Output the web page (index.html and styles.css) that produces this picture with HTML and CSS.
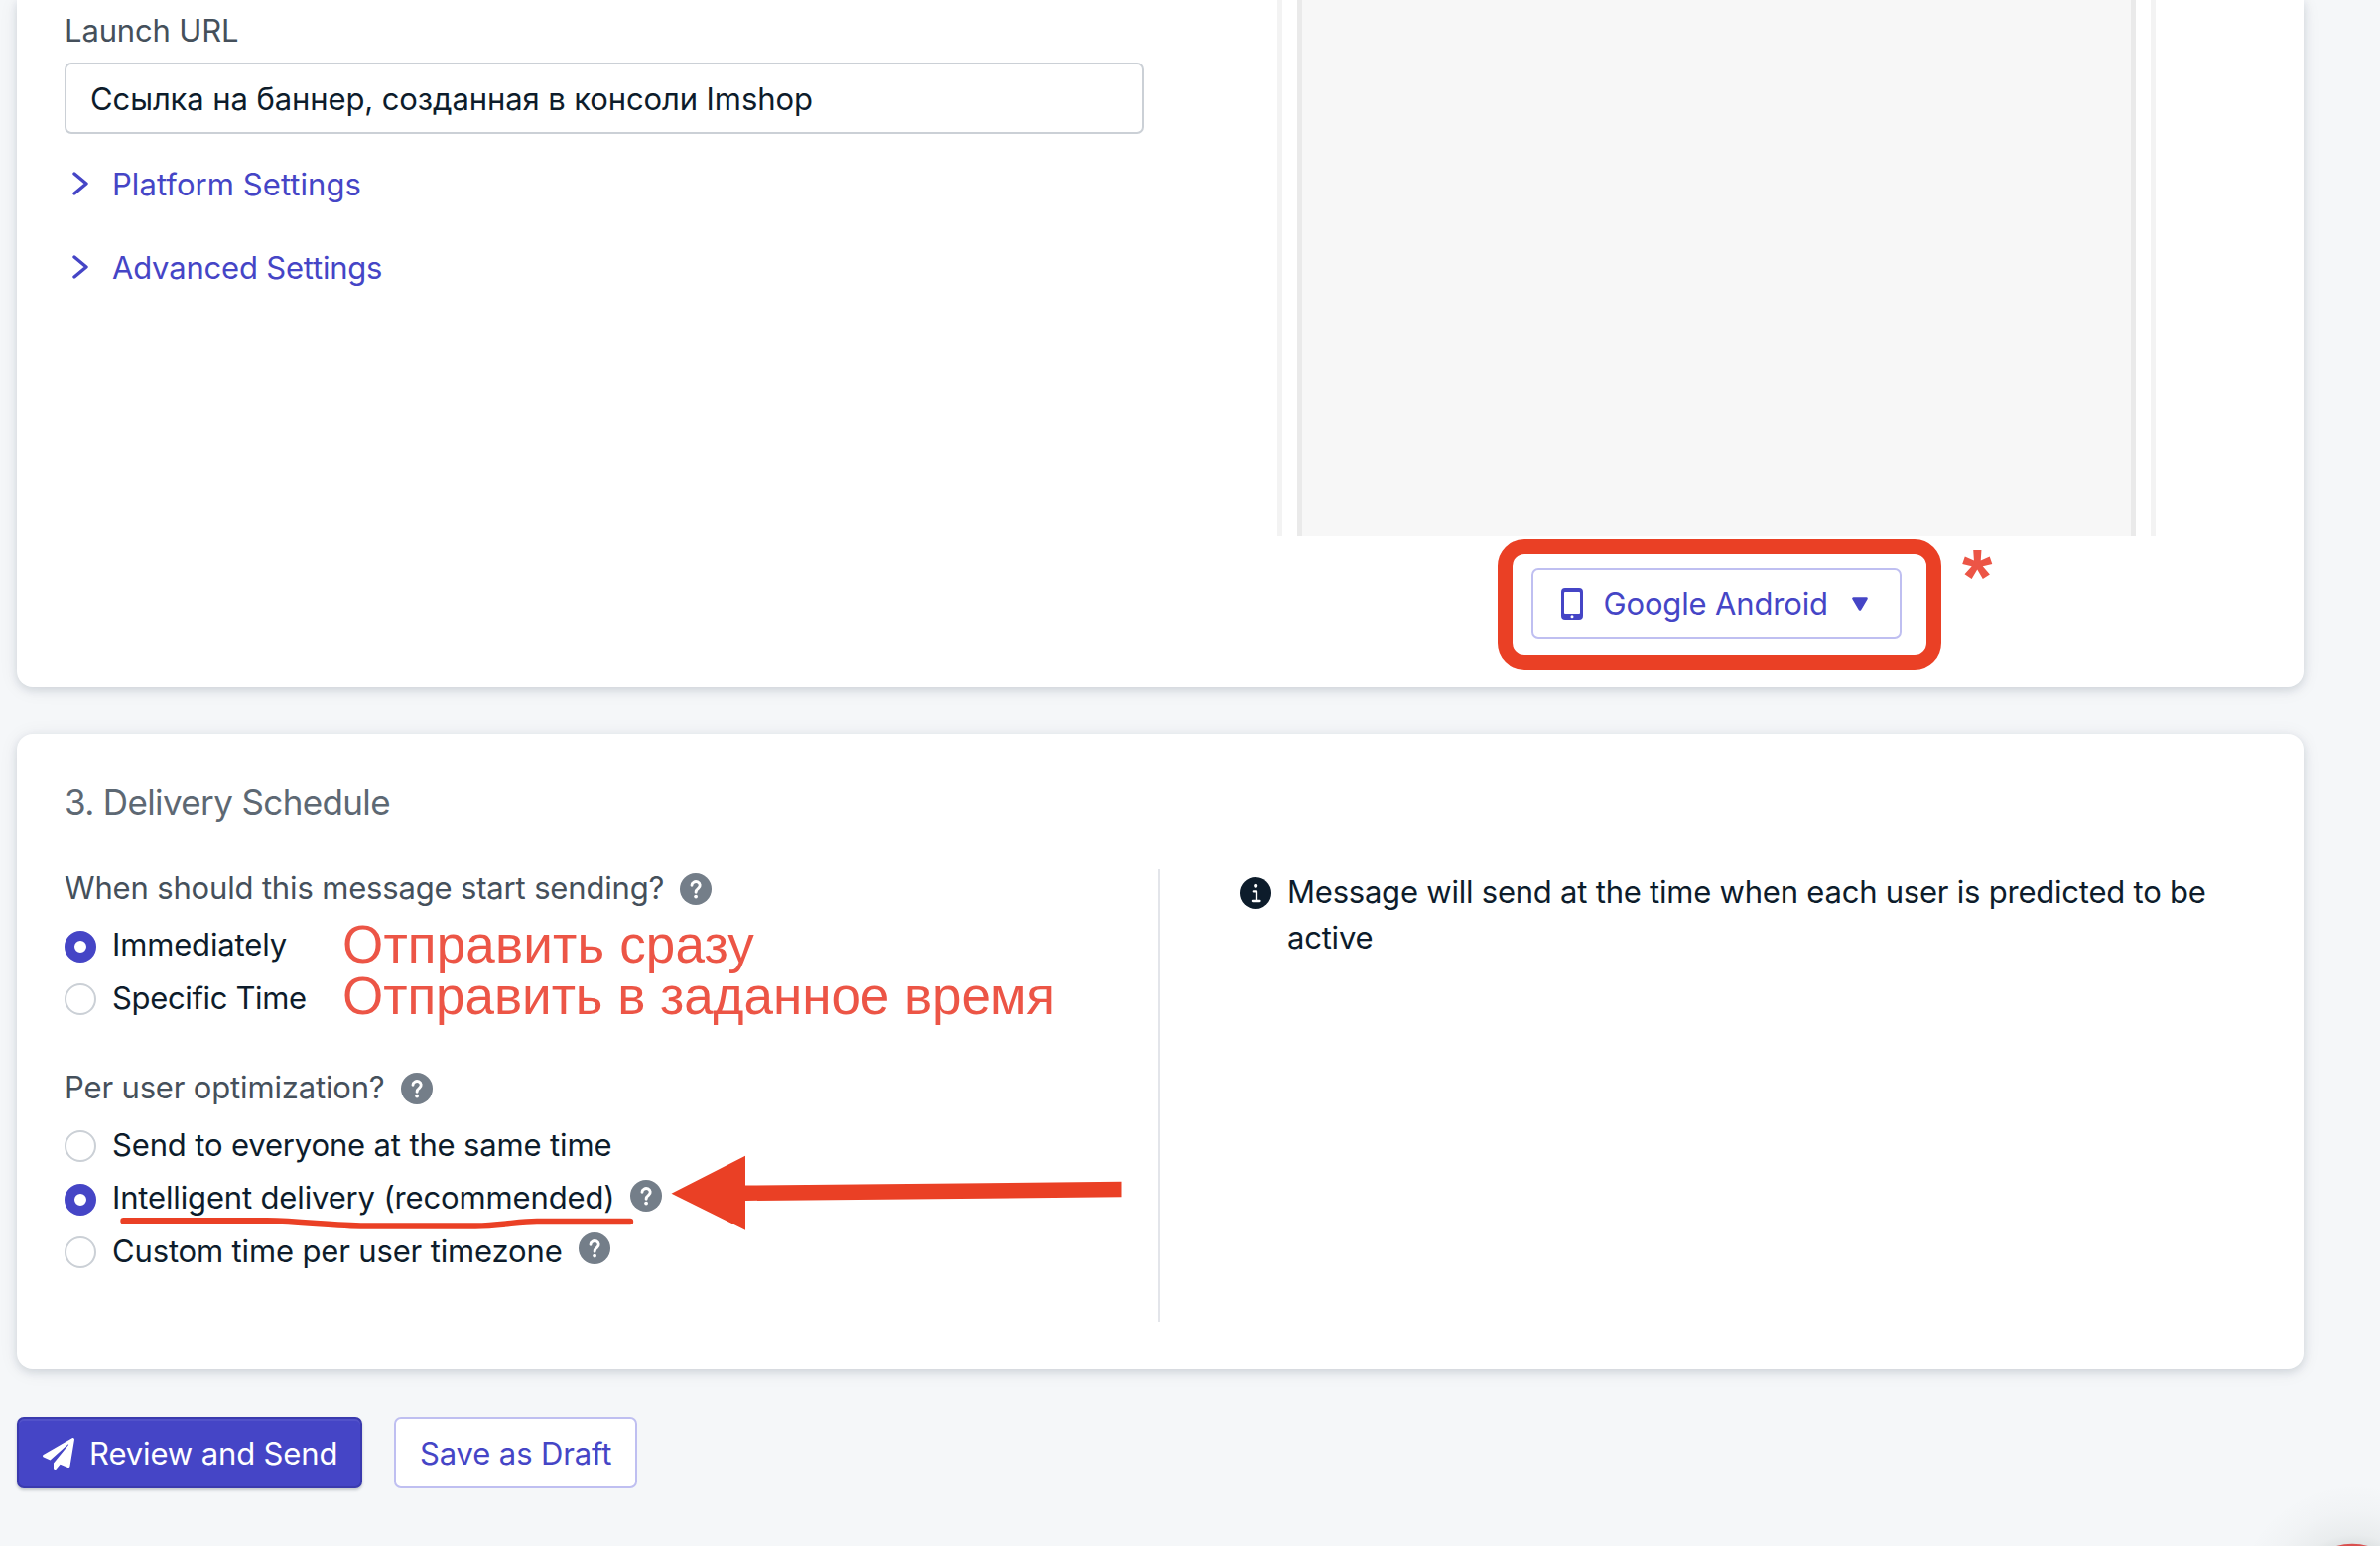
FILE: index.html
```
<!DOCTYPE html>
<html lang="en">
<head>
<meta charset="utf-8">
<title>New Push Message</title>
<link rel="stylesheet" href="styles.css">
</head>
<body>
<svg class="sprite" aria-hidden="true">
  <symbol id="help" viewBox="0 0 32 32">
    <circle cx="16" cy="16" r="16" fill="#747e89"/>
    <path d="M12 12.3a4.1 3.7 0 1 1 6.6 2.9C17 16.4 16.1 17 16.1 19.2" fill="none" stroke="#fff" stroke-width="2.9" stroke-linecap="round"/>
    <circle cx="16.1" cy="23.6" r="1.9" fill="#fff"/>
  </symbol>
  <symbol id="chevron" viewBox="0 0 16 24">
    <path d="M2 2l12 10L2 22" fill="none" stroke="currentColor" stroke-width="3.4" stroke-linecap="round" stroke-linejoin="round"/>
  </symbol>
</svg>

<main class="page">
  <section class="card card-message">
    <div class="form">
      <label class="label">Launch URL</label>
      <div class="field">Ссылка на баннер, созданная в консоли Imshop</div>
      <a class="disclosure platform"><svg class="chevron"><use href="#chevron"/></svg><span>Platform Settings</span></a>
      <a class="disclosure advanced"><svg class="chevron"><use href="#chevron"/></svg><span>Advanced Settings</span></a>
    </div>
    <div class="preview">
      <div class="device"><div class="screen"></div></div>
      <button class="btn btn-outline device-picker">
        <svg class="phone" viewBox="0 0 22 32"><path fill-rule="evenodd" fill="currentColor" d="M4 0h14a4 4 0 0 1 4 4v24a4 4 0 0 1-4 4H4a4 4 0 0 1-4-4V4a4 4 0 0 1 4-4zM4 4a1 1 0 0 0-1 1v20a1 1 0 0 0 1 1h14a1 1 0 0 0 1-1V5a1 1 0 0 0-1-1zM11 27.2a1.5 1.5 0 1 0 0 3a1.5 1.5 0 1 0 0-3z"/></svg>
        <span>Google Android</span>
        <svg class="caret" viewBox="0 0 16 14"><path d="M1.500 1.500h13L8 12.500z" fill="currentColor" stroke="currentColor" stroke-width="2.600" stroke-linejoin="round"/></svg>
      </button>
    </div>
  </section>

  <section class="card card-schedule">
    <h2 class="title">3. Delivery Schedule</h2>
    <div class="columns">
      <div class="options">
        <div class="question"><span>When should this message start sending?</span><svg class="help"><use href="#help"/></svg></div>
        <div class="group">
          <label class="option"><i class="radio on"></i><span>Immediately</span></label>
          <label class="option"><i class="radio"></i><span class="tight">Specific Time</span></label>
        </div>
        <div class="question second"><span>Per user optimization?</span><svg class="help"><use href="#help"/></svg></div>
        <div class="group">
          <label class="option"><i class="radio"></i><span>Send to everyone at the same time</span></label>
          <label class="option"><i class="radio on"></i><span>Intelligent delivery (recommended)</span><svg class="help raised"><use href="#help"/></svg></label>
          <label class="option"><i class="radio"></i><span>Custom time per user timezone</span><svg class="help raised"><use href="#help"/></svg></label>
        </div>
      </div>
      <div class="note">
        <svg class="info" viewBox="0 0 32 32"><circle cx="16" cy="16" r="16" fill="#0d1c2b"/><circle cx="16.2" cy="8.8" r="2.1" fill="#fff"/><path d="M13.800 14.400h3.200v9.400M12.900 24h7.600" fill="none" stroke="#fff" stroke-width="2.300" stroke-linecap="round" stroke-linejoin="round"/></svg>
        <p>Message will send at the time when each user is predicted to be active</p>
      </div>
    </div>
  </section>

  <div class="actions">
    <button class="btn btn-primary">
      <svg class="plane" viewBox="0 0 512 512"><path fill="currentColor" d="M476 3.2L12.5 270.6c-18.1 10.4-15.8 35.6 2.2 43.2L121 358.4l287.3-253.2c5.5-4.9 13.3 2.6 8.6 8.3L176 407v80.5c0 23.6 28.5 32.9 42.5 15.8L282 426l124.600 52.200c14.200 6 30.400-2.900 33-18.200l72-432C515 7.800 493.300-6.800 476 3.200z"/></svg>
      <span>Review and Send</span>
    </button>
    <button class="btn btn-outline"><span>Save as Draft</span></button>
  </div>
</main>

<div class="highlight"></div>
<div class="mark asterisk">*</div>
<div class="mark mark-now">Отправить сразу</div>
<div class="mark mark-time">Отправить в заданное время</div>
<svg class="scribble" viewBox="0 0 518 16"><path d="M3.500 4.300H148C185 5 215 9.500 247 9.500H358C385 9 402 5 420 5H514" fill="none" stroke="#ea4025" stroke-width="6.400" stroke-linecap="round" stroke-linejoin="round"/></svg>
<svg class="arrow" viewBox="0 0 456 76"><path d="M.5 38.800L75 .8v29.800L453.500 26.800v15.500L75 46v29.800z" fill="#ea4025"/></svg>
<svg class="chat" viewBox="0 0 198 128">
  <defs>
    <radialGradient id="glow" gradientUnits="userSpaceOnUse" cx="172" cy="186" r="120">
      <stop offset=".46" stop-color="#14281e" stop-opacity=".12"/>
      <stop offset=".58" stop-color="#14281e" stop-opacity=".05"/>
      <stop offset=".78" stop-color="#14281e" stop-opacity=".018"/>
      <stop offset="1" stop-color="#14281e" stop-opacity="0"/>
    </radialGradient>
  </defs>
  <rect width="198" height="128" fill="url(#glow)"/>
  <circle cx="170" cy="182" r="56.300" fill="#d9504f"/>
</svg>
</body>
</html>
```
FILE: styles.css
```
* { box-sizing: border-box; }

body {
  margin: 0;
  position: relative;
  height: 1558px;
  overflow: hidden;
  background: #f5f7f9;
  color: #0d1c2b;
  font: 31px/46px Inter, "Noto Sans", sans-serif;
  letter-spacing: -0.15px;
}

h2, p { margin: 0; font-weight: 400; }
svg { display: block; flex: none; }
.sprite { position: absolute; width: 0; height: 0; }

.page { width: 2304px; margin-left: 17px; }

.card {
  background: #fff;
  border-radius: 16px;
  box-shadow: 0 3px 8px rgba(25, 40, 65, .13), 0 2px 20px rgba(25, 40, 65, .07);
}

.card-message {
  display: flex;
  height: 692px;
  padding-left: 48px;
  border-radius: 0 0 16px 16px;
}
.form { width: 1088px; padding-top: 8px; }
.label { display: block; color: #45505b; }
.field {
  height: 72px;
  margin-top: 9px;
  padding: 12px 24px;
  border: 2px solid #cbd0d6;
  border-radius: 7px;
  letter-spacing: -0.1px;
}
.disclosure {
  display: flex;
  align-items: center;
  gap: 24px;
  padding-left: 8px;
  color: #4545c6;
}
.chevron { width: 16px; height: 24px; margin-top: -2px; }
.platform { margin-top: 28px; letter-spacing: .06px; }
.advanced { margin-top: 38px; letter-spacing: -.2px; }

.preview {
  display: flex;
  flex-direction: column;
  align-items: center;
  width: 885px;
  margin-left: 134px;
}
.device {
  width: 885px;
  height: 540px;
  padding: 0 15px;
  border: solid #f3f3f3;
  border-width: 0 5px;
}
.screen {
  height: 540px;
  border: solid #eaeaea;
  border-width: 0 5px;
  background: #f7f7f7;
}

.btn {
  display: flex;
  align-items: center;
  height: 72px;
  padding: 1px 24px 0;
  border: 2px solid;
  border-radius: 7px;
  font: inherit;
  letter-spacing: -.12px;
  white-space: nowrap;
}
.btn-outline { background: #fff; border-color: #bfbff1; color: #4545c6; }
.btn-primary {
  background: #4545c6;
  border-color: #3a3aae;
  color: #fff;
  box-shadow: 0 2px 3px rgba(13, 28, 43, .22), inset 0 2px 0 rgba(255, 255, 255, .07);
}
.device-picker { width: 373px; margin: 32px 1px 0 0; padding-left: 28px; letter-spacing: -.15px; }
.phone { width: 22px; height: 32px; margin-right: 21px; }
.caret { width: 16px; height: 14px; margin-left: 24px; }
.plane { width: 32px; height: 32px; margin-right: 15px; }

.card-schedule { height: 640px; margin-top: 48px; padding: 43px 48px 0; }
.title { color: #5d6873; font-size: 35px; line-height: 50px; letter-spacing: -.63px; }
.columns { display: flex; align-items: flex-start; margin-top: 43px; }
.options { width: 1104px; height: 456px; border-right: 2px solid #e3e5ea; }
.question { display: flex; align-items: center; gap: 16px; margin-top: -4px; color: #45505b; letter-spacing: -.16px; }
.question.second { margin-top: 39px; }
.help { width: 32px; height: 32px; margin-top: 2px; }
.group { margin-top: 9px; }
.second + .group { margin-top: 10px; }
.option { display: flex; align-items: center; height: 53.4px; }
.option span { margin: -3px 16px 0; }
.option .tight { letter-spacing: -.35px; }
.raised { margin-top: -8px; }
.radio { width: 32px; height: 32px; border: 2px solid #cbd0d6; border-radius: 50%; background: #fff; }
.radio.on { border: 10px solid #4545c6; }

.note { display: flex; margin-left: 80px; }
.info { width: 32px; height: 32px; margin: 8px 16px 0 0; }
.note p { width: 960px; letter-spacing: -.22px; }

.actions { display: flex; gap: 32px; margin-top: 48px; }
.actions .btn-outline { width: 245px; }
.actions .btn-primary { width: 348px; }

/* Annotations drawn over the page */
.highlight {
  position: absolute;
  left: 1509px;
  top: 543px;
  width: 447px;
  height: 132px;
  border: 15px solid #ea4025;
  border-radius: 27px;
}
.mark {
  position: absolute;
  color: #ec5546;
  font: 53px/50px "Liberation Sans", sans-serif;
  letter-spacing: 0;
  white-space: nowrap;
}
.mark-now { left: 345px; top: 927px; letter-spacing: .16px; }
.mark-time { left: 345px; top: 979px; letter-spacing: -.04px; }
.asterisk { left: 1977px; top: 546px; font-size: 78px; font-weight: 700; line-height: 70px; }
.scribble { position: absolute; left: 121px; top: 1226px; width: 518px; height: 16px; }
.arrow { position: absolute; left: 676px; top: 1164px; width: 456px; height: 76px; }
.chat { position: absolute; left: 2200px; top: 1430px; width: 198px; height: 128px; }
```
